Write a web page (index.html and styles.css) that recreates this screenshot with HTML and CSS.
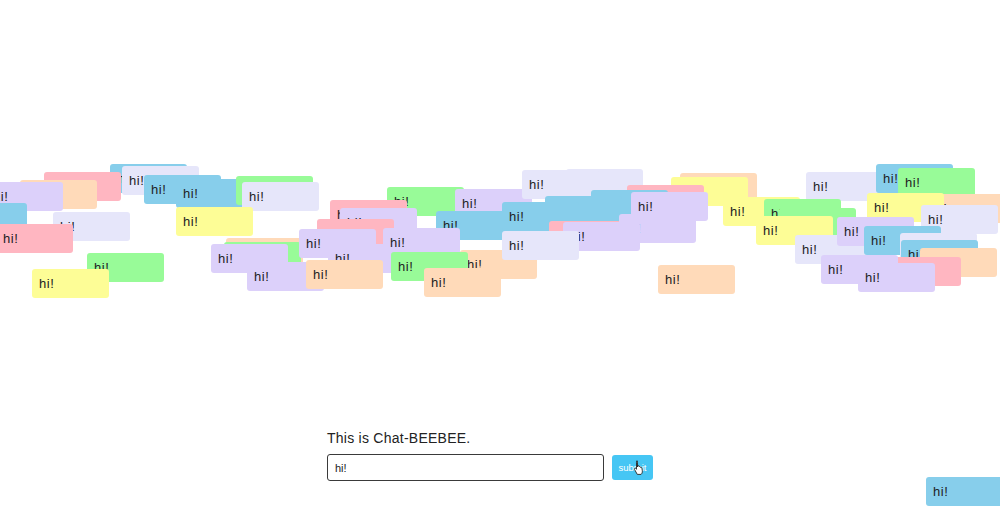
FILE: index.html
```html
<!DOCTYPE html>
<html lang="en">
<head>
<meta charset="utf-8">
<title>Chat-BEEBEE</title>
<link rel="stylesheet" href="styles.css">
</head>
<body>
<div class="page">
  <div class="canvas">
    <div class="bubble sky" style="left:110px;top:164px">hi!</div>
    <div class="bubble lav" style="left:122px;top:166px">hi!</div>
    <div class="bubble pink" style="left:44px;top:172px">hi!</div>
    <div class="bubble peach" style="left:20px;top:180px">hi!</div>
    <div class="bubble purple" style="left:-14px;top:182px">hi!</div>
    <div class="bubble sky" style="left:-50px;top:203px">hi!</div>
    <div class="bubble lav" style="left:53px;top:212px">hi!</div>
    <div class="bubble pink" style="left:-4px;top:224px">hi!</div>
    <div class="bubble green" style="left:87px;top:253px">hi!</div>
    <div class="bubble yellow" style="left:32px;top:269px">hi!</div>
    <div class="bubble sky" style="left:144px;top:175px">hi!</div>
    <div class="bubble sky" style="left:176px;top:179px">hi!</div>
    <div class="bubble green" style="left:236px;top:176px">hi!</div>
    <div class="bubble lav" style="left:242px;top:182px">hi!</div>
    <div class="bubble yellow" style="left:176px;top:207px">hi!</div>
    <div class="bubble peach" style="left:226px;top:238px">hi!</div>
    <div class="bubble green" style="left:224px;top:242px">hi!</div>
    <div class="bubble purple" style="left:211px;top:244px">hi!</div>
    <div class="bubble purple" style="left:247px;top:262px">hi!</div>

    <div class="bubble green" style="left:387px;top:187px">hi!</div>
    <div class="bubble pink" style="left:330px;top:200px">hi!</div>
    <div class="bubble purple" style="left:340px;top:208px">hi!</div>
    <div class="bubble pink" style="left:317px;top:219px">hi!</div>
    <div class="bubble purple" style="left:455px;top:189px">hi!</div>
    <div class="bubble sky" style="left:436px;top:211px">hi!</div>
    <div class="bubble purple" style="left:299px;top:229px">hi!</div>
    <div class="bubble purple" style="left:328px;top:244px">hi!</div>
    <div class="bubble purple" style="left:383px;top:228px">hi!</div>
    <div class="bubble peach" style="left:306px;top:260px">hi!</div>
    <div class="bubble peach" style="left:460px;top:250px">hi!</div>
    <div class="bubble green" style="left:391px;top:252px">hi!</div>
    <div class="bubble peach" style="left:424px;top:268px">hi!</div>

    <div class="bubble peach" style="left:680px;top:173px">hi!</div>
    <div class="bubble yellow" style="left:671px;top:177px">hi!</div>
    <div class="bubble lav" style="left:566px;top:169px">hi!</div>
    <div class="bubble lav" style="left:522px;top:170px">hi!</div>
    <div class="bubble pink" style="left:627px;top:185px">hi!</div>
    <div class="bubble sky" style="left:591px;top:190px">hi!</div>
    <div class="bubble sky" style="left:545px;top:196px">hi!</div>
    <div class="bubble sky" style="left:502px;top:202px">hi!</div>
    <div class="bubble pink" style="left:549px;top:221px">hi!</div>
    <div class="bubble purple" style="left:619px;top:214px">hi!</div>
    <div class="bubble purple" style="left:563px;top:222px">hi!</div>
    <div class="bubble purple" style="left:631px;top:192px">hi!</div>
    <div class="bubble lav" style="left:502px;top:231px">hi!</div>

    <div class="bubble peach" style="left:658px;top:265px">hi!</div>
    <div class="bubble lav" style="left:806px;top:172px">hi!</div>
    <div class="bubble yellow" style="left:723px;top:197px">hi!</div>
    <div class="bubble green" style="left:764px;top:199px">hi!</div>
    <div class="bubble green" style="left:779px;top:208px">hi!</div>
    <div class="bubble yellow" style="left:756px;top:216px">hi!</div>
    <div class="bubble lav" style="left:795px;top:235px">hi!</div>

    <div class="bubble sky" style="left:876px;top:164px">hi!</div>
    <div class="bubble green" style="left:898px;top:168px">hi!</div>
    <div class="bubble peach" style="left:925px;top:194px">hi!</div>
    <div class="bubble yellow" style="left:867px;top:193px">hi!</div>
    <div class="bubble lav" style="left:921px;top:205px">hi!</div>
    <div class="bubble purple" style="left:837px;top:217px">hi!</div>
    <div class="bubble sky" style="left:864px;top:226px">hi!</div>
    <div class="bubble lav" style="left:900px;top:233px">hi!</div>
    <div class="bubble sky" style="left:901px;top:240px">hi!</div>
    <div class="bubble peach" style="left:920px;top:248px">hi!</div>
    <div class="bubble pink" style="left:884px;top:257px">hi!</div>
    <div class="bubble purple" style="left:821px;top:255px">hi!</div>
    <div class="bubble purple" style="left:858px;top:263px">hi!</div>

    <div class="bubble sky" style="left:926px;top:477px">hi!</div>
  </div>

  <div class="chat">
    <p class="title">This is Chat-BEEBEE.</p>
    <form class="row">
      <input class="field" type="text" value="hi!">
      <div class="submit-wrap">
        <button class="submit" type="button">submit</button>
        <svg class="cursor" width="12" height="15" viewBox="0 0 12 15" aria-hidden="true">
          <path d="M3.5 1.2c.6 0 1 .4 1 1V7l.2-1.4c.6-.3 1.2 0 1.3.6l.1.5c.5-.4 1.2-.2 1.4.4l.1.4c.5-.3 1.2 0 1.3.6l.4 2.6c.2 1.6-.3 2.8-1.2 3.7H4.3L1.6 9.6c-.4-.6-.2-1.2.4-1.4.4-.1.8 0 1 .3l.5.8V2.2c0-.6.4-1 1-1z" fill="#ffffff" stroke="#222222" stroke-width="0.9" stroke-linejoin="round"/>
        </svg>
      </div>
    </form>
  </div>
</div>
</body>
</html>
```

FILE: styles.css
```css
html, body {
  margin: 0;
  padding: 0;
  background: #ffffff;
}

body {
  font-family: "Liberation Sans", Arial, sans-serif;
  color: #222222;
  overflow: hidden;
}

.page {
  position: relative;
  width: 1000px;
  height: 508px;
  overflow: hidden;
}

.canvas {
  position: absolute;
  inset: 0;
}

.bubble {
  position: absolute;
  width: 77px;
  height: 29px;
  box-sizing: border-box;
  padding-left: 7px;
  border-radius: 3px;
  font-size: 13px;
  letter-spacing: 0.6px;
  line-height: 29px;
  color: #222222;
  white-space: nowrap;
}

.sky { background: #87ceeb; }
.lav { background: #e6e6fa; }
.pink { background: #ffb6c1; }
.peach { background: #ffdab9; }
.purple { background: #dcd0fa; }
.green { background: #98fb98; }
.yellow { background: #fdfd96; }

.chat {
  position: relative;
  display: flex;
  flex-direction: column;
  gap: 8px;
  width: 346px;
  margin: 0 auto;
  padding-top: 430px;
}

.title {
  margin: 0;
  font-size: 14px;
  letter-spacing: 0.25px;
  line-height: 16px;
  color: #222222;
}

.row {
  display: flex;
  align-items: center;
  gap: 8px;
  margin: 0;
}

.field {
  width: 277px;
  height: 27px;
  box-sizing: border-box;
  border: 1.5px solid #3a3a3a;
  border-radius: 3px;
  padding: 0 7px;
  font-family: "Liberation Sans", Arial, sans-serif;
  font-size: 11px;
  color: #222222;
  background: #ffffff;
}

.submit-wrap {
  position: relative;
  display: flex;
}

.submit {
  width: 41px;
  height: 25px;
  border: none;
  border-radius: 3px;
  background: #46c6f4;
  color: #ffffff;
  font-family: "Liberation Sans", Arial, sans-serif;
  font-size: 9.5px;
  padding: 0;
}

.cursor {
  position: absolute;
  left: 21px;
  top: 5px;
}
```
